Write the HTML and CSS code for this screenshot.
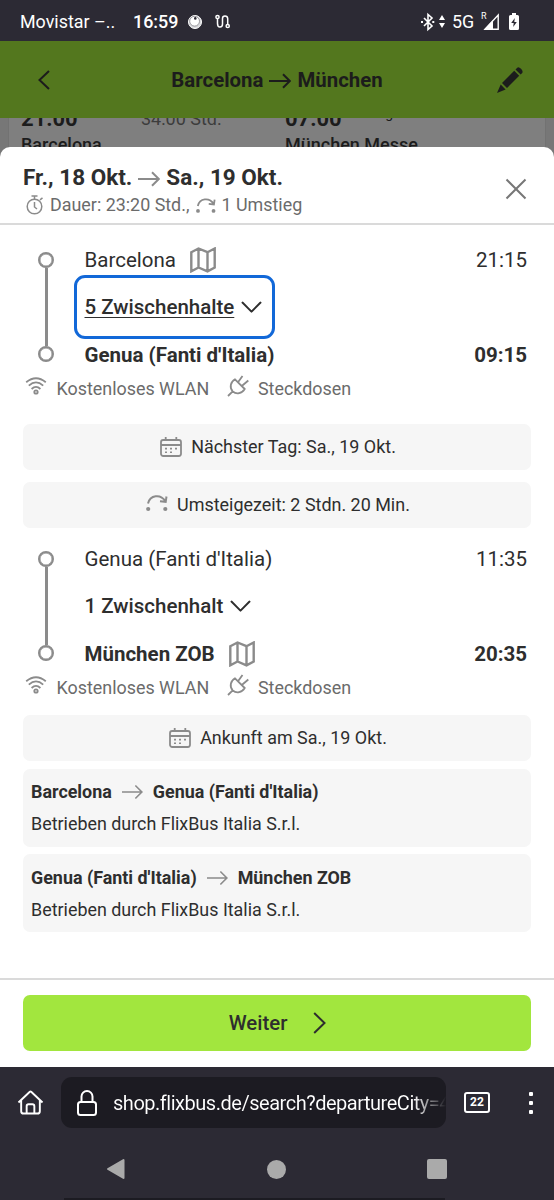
FILE: index.html
```html
<!DOCTYPE html>
<html lang="de">
<head>
<meta charset="utf-8">
<title>Barcelona → München</title>
<link rel="stylesheet" href="styles.css">
</head>
<body>
<svg class="defs" aria-hidden="true">
  <symbol id="arrow" viewBox="0 0 22 16"><path d="M0 8H20.5M14 1.2L20.8 8L14 14.8"/></symbol>
  <symbol id="map" viewBox="0 0 26 26"><path d="M1.3 5.2L8.5 1.5L17.5 5.2L24.7 1.5V20.5L17.5 24.3L8.5 20.5L1.3 24.3ZM8.5 1.5V20.5M17.5 5.2V24.3"/></symbol>
  <symbol id="chev" viewBox="0 0 22 12"><path d="M1 .8L11 10.8L21 .8"/></symbol>
  <symbol id="wifi" viewBox="0 0 22 20"><path d="M1.2 6.2Q11-1.8 20.8 6.2M3.8 9.6Q11 3.2 18.2 9.6M6.6 13Q11 8.8 15.4 13"/><circle cx="11" cy="16" r="1.7"/></symbol>
  <symbol id="plug" viewBox="0 0 22 22"><path d="M1 21L5.7 16.3M8 4.3L17.7 14C15 18.5 9.5 19.8 5.7 16.3C2.2 12.5 3.5 7 8 4.3ZM11 7.3L15.5 1M14.8 11L21.3 5.5"/></symbol>
  <symbol id="transfer" viewBox="0 0 22 18"><path d="M2 9.5C4 1 14.5-.5 19.5 7.3M20.5 2.5L19.7 7.8L14 7.2"/><circle class="dot" cx="2.2" cy="15" r="2.1"/><circle class="dot" cx="19.3" cy="15" r="2.1"/></symbol>
  <symbol id="cal" viewBox="0 0 22 20"><rect x="1" y="3" width="20" height="16" rx="2.2"/><path d="M1 8H21M5.7 0V4M16.3 0V4"/><path class="dots" d="M5 11.6h2M10 11.6h2M15 11.6h2M5 15.2h2M10 15.2h2"/></symbol>
</svg>
<div class="phone">
  <div class="status">
    <span class="carrier">Movistar –..</span><span class="clock">16:59</span>
    <svg class="s-ball" viewBox="0 0 16 16"><circle cx="8" cy="8" r="6.5" fill="#d8d8dc" stroke="#fff" stroke-width="1"/><circle cx="7.6" cy="7.2" r="4.9" fill="#fff" stroke="#77757d" stroke-width=".7"/><circle cx="8.3" cy="4.4" r="1.3" fill="#2c2a34" stroke="none"/></svg>
    <svg class="s-route" viewBox="0 0 16 16"><path d="M2.5 4.5V9.5Q2.5 13 5 13T7.5 10V4.5Q7.5 2 10 2T12.7 4.5V10"/><circle cx="2.5" cy="3" r="1.6"/><circle cx="12.7" cy="12" r="1.6"/></svg>
    <span class="fill"></span>
    <svg class="s-bt" viewBox="0 0 24 18"><path d="M3 5L11 13L7 16.5V1.5L11 5L3 13" fill="none" stroke="#fff" stroke-width="1.6"/><path d="M0 8h2v2H0zM11.3 8h2v2h-2zM18 7L21 2L24 7zM18 10L21 15L24 10z" fill="#fff"/></svg>
    <span class="net">5G</span>
    <svg class="s-sig" viewBox="0 0 18 18"><path d="M16.2 2V16.2H3Z" fill="none" stroke="#fff" stroke-width="1.4"/><path d="M11 7V16.5H2Z" fill="#fff"/></svg><span class="roam">R</span>
    <svg class="s-bat" viewBox="0 0 10 17"><path d="M3 0H7V2H8.5Q10 2 10 3.5V15.5Q10 17 8.5 17H1.5Q0 17 0 15.5V3.5Q0 2 1.5 2H3Z" fill="#fff"/><path d="M5.8 5L2.2 10H4.7L4.2 14L7.8 9H5.3Z" fill="#2c2a34"/></svg>
  </div>
  <header class="top">
    <svg class="back" viewBox="0 0 12 20"><path d="M11 1L1.5 10L11 19"/></svg>
    <h1>Barcelona <svg viewBox="0 0 22 16"><use href="#arrow"/></svg> München</h1>
    <svg class="pencil" viewBox="0 0 28 28"><path d="M18.2 4.8L23.2 9.8L11 22L6 17ZM4.7 18.5L9.6 23.4L1 27ZM19.5 3.4L21 1.9Q22.6.3 25 2.8T26.2 7L24.6 8.5Z"/></svg>
  </header>
  <div class="results"><div class="result">
    <div><b>21:00</b><span>Barcelona</span></div><div class="dur">34:00 Std.</div><div><b>07:00</b><span>München Messe</span></div><div class="day">Tag</div>
  </div></div>
  <main class="sheet">
    <div class="sheet-head">
      <div>
        <h2>Fr., 18 Okt. <svg class="g" viewBox="0 0 22 16"><use href="#arrow"/></svg> Sa., 19 Okt.</h2>
        <p class="meta"><svg class="g timer" viewBox="0 0 20 20"><circle cx="9.5" cy="11.5" r="7.3"/><path d="M9.5 7V12L12 14M6.5 1H12.5M9.5 1V4M15 4.8L17.5 2.8"/></svg><span>Dauer: 23:20 Std.,</span><svg class="g trans" viewBox="0 0 22 18"><use href="#transfer"/></svg><span>1 Umstieg</span></p>
      </div>
      <svg class="close" viewBox="0 0 22 22"><path d="M1.5 1.5L20.5 20.5M20.5 1.5L1.5 20.5"/></svg>
    </div>
    <div class="body">
      <section class="leg first">
        <div class="route">
          <div class="line"><i></i><u></u><i></i></div>
          <div class="stops">
            <div class="stop"><span class="name">Barcelona</span><svg class="g map" viewBox="0 0 26 26"><use href="#map"/></svg><time>21:15</time></div>
            <div class="mid"><button class="toggle focus"><span>5 Zwischenhalte</span><svg viewBox="0 0 22 12"><use href="#chev"/></svg></button></div>
            <div class="stop end"><span class="name">Genua (Fanti d'Italia)</span><time>09:15</time></div>
          </div>
        </div>
        <div class="amen"><svg class="g wifi" viewBox="0 0 22 20"><use href="#wifi"/></svg><span class="wlan">Kostenloses WLAN</span><svg class="g plug" viewBox="0 0 22 22"><use href="#plug"/></svg><span class="sock">Steckdosen</span></div>
      </section>
      <div class="note n1"><svg class="g cal" viewBox="0 0 22 20"><use href="#cal"/></svg><span>Nächster Tag: Sa., 19 Okt.</span></div>
      <div class="note n2"><svg class="g tr" viewBox="0 0 22 18"><use href="#transfer"/></svg><span>Umsteigezeit: 2 Stdn. 20 Min.</span></div>
      <section class="leg">
        <div class="route">
          <div class="line"><i></i><u></u><i></i></div>
          <div class="stops">
            <div class="stop"><span class="name">Genua (Fanti d'Italia)</span><time>11:35</time></div>
            <div class="mid"><button class="toggle"><span>1 Zwischenhalt</span><svg viewBox="0 0 22 12"><use href="#chev"/></svg></button></div>
            <div class="stop end"><span class="name">München ZOB</span><svg class="g map" viewBox="0 0 26 26"><use href="#map"/></svg><time>20:35</time></div>
          </div>
        </div>
        <div class="amen"><svg class="g wifi" viewBox="0 0 22 20"><use href="#wifi"/></svg><span class="wlan">Kostenloses WLAN</span><svg class="g plug" viewBox="0 0 22 22"><use href="#plug"/></svg><span class="sock">Steckdosen</span></div>
      </section>
      <div class="note n3"><svg class="g cal" viewBox="0 0 22 20"><use href="#cal"/></svg><span>Ankunft am Sa., 19 Okt.</span></div>
      <div class="operator"><h3><span>Barcelona</span><svg class="g" viewBox="0 0 22 16"><use href="#arrow"/></svg><span>Genua (Fanti d'Italia)</span></h3><p>Betrieben durch FlixBus Italia S.r.l.</p></div>
      <div class="operator"><h3><span>Genua (Fanti d'Italia)</span><svg class="g" viewBox="0 0 22 16"><use href="#arrow"/></svg><span>München ZOB</span></h3><p>Betrieben durch FlixBus Italia S.r.l.</p></div>
    </div>
    <div class="foot"><button class="go"><span>Weiter</span><svg viewBox="0 0 13 22"><path d="M1.2 1L11.5 11L1.2 21"/></svg></button></div>
  </main>
  <div class="browser">
    <svg class="home" viewBox="0 0 28 26"><path d="M1.5 13L13.3 1.8Q14 1.2 14.7 1.8L26.5 13M4.3 10.5V22Q4.3 24.5 6.8 24.5H21.2Q23.7 24.5 23.7 22V10.5M10 24V16.8Q10 14.8 12 14.8H16Q18 14.8 18 16.8V24"/></svg>
    <div class="url">
      <svg class="lock" viewBox="0 0 20 26"><rect x="1" y="12" width="18" height="13" rx="2.5"/><path d="M4.5 12V6.5a5.5 5.5 0 0 1 11 0V12"/></svg>
      <span>shop.flixbus.de/search?departureCity=4</span>
    </div>
    <div class="tabs">22</div>
    <div class="more"><i></i><i></i><i></i></div>
  </div>
  <div class="nav">
    <svg viewBox="0 0 20 22"><path d="M17.5 2V20L2 11Z" stroke-linejoin="round"/></svg>
    <i class="circle"></i><i class="square"></i>
  </div>
  <div class="edge"></div>
</div>
</body>
</html>
```
FILE: styles.css
```css
* { box-sizing: border-box; }
body { margin: 0; font-family: Roboto, "Liberation Sans", sans-serif; color: #2e2e2e; background: #2c2a34; }
h1, h2, h3, p { margin: 0; }
button { border: 0; background: none; font: inherit; color: inherit; padding: 0; }
svg { display: block; flex: none; fill: none; stroke: #2e2e2e; stroke-width: 2; overflow: visible; }
.defs { width: 0; height: 0; position: absolute; }
.g { stroke: #8b8b8b; color: #8b8b8b; }
.dot { fill: #8b8b8b; stroke: none; }
.dots { stroke-width: 1.6; }
.phone { width: 554px; height: 1200px; display: flex; flex-direction: column; overflow: hidden; white-space: nowrap; position: relative; z-index: 0; }

.status { height: 41px; flex: none; background: #2c2a34; color: #fff; display: flex; align-items: center; padding: 2px 35px 0 20px; font-size: 17.9px; }
.carrier { width: 113px; }
.clock { font-weight: 500; width: 54px; }
.s-ball { width: 16px; height: 16px; }
.s-route { width: 16px; height: 16px; margin-left: 12px; stroke: #fff; stroke-width: 1.5; }
.fill { flex: 1; }
.s-bt { width: 24px; height: 18px; stroke: none; }
.net { margin-left: 7px; width: 30px; }
.s-sig { width: 18px; height: 18px; stroke: none; }
.roam { font-size: 9px; line-height: 9px; width: 9px; margin: -10px 9px 0 -18px; transform: translateX(-1px); }
.s-bat { width: 10px; height: 17px; margin-left: 9px; stroke: none; }

.top { height: 77px; flex: none; background: #53771e; display: flex; align-items: center; padding: 0 30px 0 38px; color: #1c1c1c; }
.top svg { stroke: #1c1c1c; }
.back { width: 12px; height: 20px; }
.top h1 { flex: 1; font-size: 20.4px; font-weight: 700; display: flex; align-items: center; justify-content: center; gap: 6px; padding-left: 8px; }
.top h1 svg { width: 22px; height: 16px; margin-top: 2px; }
.top .pencil { width: 28px; height: 28px; fill: #1c1c1c; stroke: none; }
.results { height: 29px; flex: none; background: #777; padding: 0 8px; overflow: hidden; }
.result { background: #7f7f7f; border: solid #727272; border-width: 0 1px; height: 29px; display: flex; color: #1c1c1c; padding-left: 12px; }
.result > div { width: 120px; margin-top: -11px; font-size: 18px; line-height: 22px; }
.result > div:nth-child(3) { width: 97px; }
.result b { display: block; font-size: 22px; line-height: 24px; }
.result span { display: block; font-weight: 500; line-height: 27px; }
.result .dur { width: 144px; margin-top: -10px; color: #3c3c3c; }
.result > .day { font-size: 14px; margin-top: -16px; margin-left: -12px; }

.sheet { height: 920px; flex: none; background: #fff; border-radius: 10px 10px 0 0; display: flex; flex-direction: column; position: relative; }
.sheet::before { content: ""; position: absolute; z-index: -1; left: 0; right: 0; top: 0; height: 12px; background: #777; }
.sheet-head { height: 78px; flex: none; border-bottom: 2px solid #dadada; display: flex; justify-content: space-between; padding: 16px 27px 0 23px; }
.sheet-head h2 { font-size: 22.5px; line-height: 28px; font-weight: 700; display: flex; align-items: center; gap: 6px; }
.sheet-head h2 svg { width: 22px; height: 16px; margin-top: 3px; }
.meta { display: flex; align-items: center; font-size: 17.9px; line-height: 26px; color: #6b6b6b; margin-top: 1px; }
.timer { width: 20px; height: 20px; margin: 0 5px 0 2px; stroke-width: 1.5; }
.trans { width: 20px; height: 17px; margin: 0 5px 0 7px; }
.close { width: 22px; height: 22px; margin-top: 15px; stroke: #777; }
.body { flex: 1; padding: 0 23px; }
.leg { padding-top: 15px; }
.leg.first { padding-top: 19px; }
.route { display: flex; height: 126px; }
.line { width: 61.5px; padding: 8px 0 8px 15px; display: flex; flex-direction: column; }
.line i { width: 16px; height: 16px; border: solid #8b8b8b; border-width: 2.5px; border-radius: 50%; flex: none; box-shadow: inset 0 0 0 .5px #8b8b8b; }
.line u { flex: 1; width: 3px; margin-left: 6.5px; background: #8b8b8b; }
.stops { flex: 1; }
.stop { height: 31px; display: flex; align-items: center; font-size: 20.5px; line-height: 25px; }
.stop .name, .stop time { padding-top: 2px; }
.stop time { margin-left: auto; margin-right: 4px; }
.end { font-weight: 700; }
.map { width: 26px; height: 26px; margin-left: 14px; stroke-width: 2.4; }
.mid { height: 64px; }
.toggle { height: 64px; margin-left: -11px; border: 3px solid transparent; border-radius: 11px; padding: 0 8px; display: flex; align-items: center; gap: 7px; font-size: 20.5px; font-weight: 500; width: 201px; }
.focus { border-color: #1268d8; }
.focus span { text-decoration: underline; text-decoration-thickness: 1px; text-underline-offset: 3px; }
.toggle svg { width: 21px; height: 12px; }
.amen { height: 36px; display: flex; align-items: center; font-size: 17.9px; color: #6b6b6b; padding-left: 2px; }
.wifi { width: 22px; height: 20px; margin: -5px 9.5px 0 0; }
.wifi, .plug { stroke-width: 1.8; }
.wlan { width: 170.5px; }
.plug { width: 22px; height: 22px; margin: -5px 9px 0 0; }
.note { height: 46px; border-radius: 7px; background: #f6f6f6; display: flex; align-items: center; justify-content: center; gap: 9px; font-size: 17.95px; padding-left: 2px; }
.note span { margin-top: -2px; }
.n1 { margin-top: 18px; }
.n2 { margin-top: 12px; }
.n3 { margin-top: 10px; }
.note .cal { width: 22px; height: 20px; stroke-width: 1.8; margin-top: -1px; }
.note .tr { width: 22px; height: 18px; margin-top: -4px; }
.operator { height: 78px; margin-top: 8px; border-radius: 7px; background: #f6f6f6; padding: 8px; }
.operator + .operator { margin-top: 7px; padding-top: 9px; }
.operator h3 { display: flex; align-items: center; gap: 10px; font-size: 17.9px; line-height: 30px; font-weight: 700; }
.operator h3 svg { width: 21px; height: 16px; stroke-width: 1.7; }
.operator p { font-size: 17.9px; line-height: 34px; }
.foot { height: 89px; flex: none; border-top: 2px solid #dadada; padding: 15px 23px; }
.go { width: 100%; height: 56px; border-radius: 7px; background: #a2e63e; display: flex; align-items: center; justify-content: center; gap: 26px; font-size: 20.4px; font-weight: 500; padding-left: 1px; }
.go svg { width: 13px; height: 22px; }

.browser { height: 71px; flex: none; display: flex; align-items: center; padding: 0 21px 0 17px; color: #fff; }
.home { width: 27px; height: 25px; margin-right: 1px; stroke: #fff; }
.url { width: 385px; height: 51px; margin-left: 16px; border-radius: 11px; background: #1c1b22; display: flex; align-items: center; padding-left: 16px; font-size: 20px; overflow: hidden; }
.lock { width: 20px; height: 26px; margin-right: 16px; stroke: #fff; }
.url span { width: 333px; overflow: hidden; letter-spacing: -.48px; background: linear-gradient(90deg, #fff 300px, #1c1b22 333px); -webkit-background-clip: text; background-clip: text; color: transparent; }
.tabs { width: 26px; height: 21px; margin-left: 18px; border: 2px solid #fff; border-radius: 3px; font-size: 12px; font-weight: 700; line-height: 17px; text-align: center; }
.more { margin-left: auto; display: grid; gap: 5px; }
.more i { width: 4px; height: 4px; background: #fff; border-radius: 1px; }
.nav { height: 60px; flex: none; display: flex; align-items: center; justify-content: space-between; padding: 2px 107px 0 106px; }
.nav svg { width: 20px; height: 22px; fill: #aaa; stroke: #aaa; }
.nav i { width: 20px; height: 20px; background: #aaa; border-radius: 2px; }
.nav .circle { width: 19px; height: 19px; border-radius: 50%; }
.edge { height: 2px; width: 381px; margin-left: 64px; background: #1c1b22; }
```
